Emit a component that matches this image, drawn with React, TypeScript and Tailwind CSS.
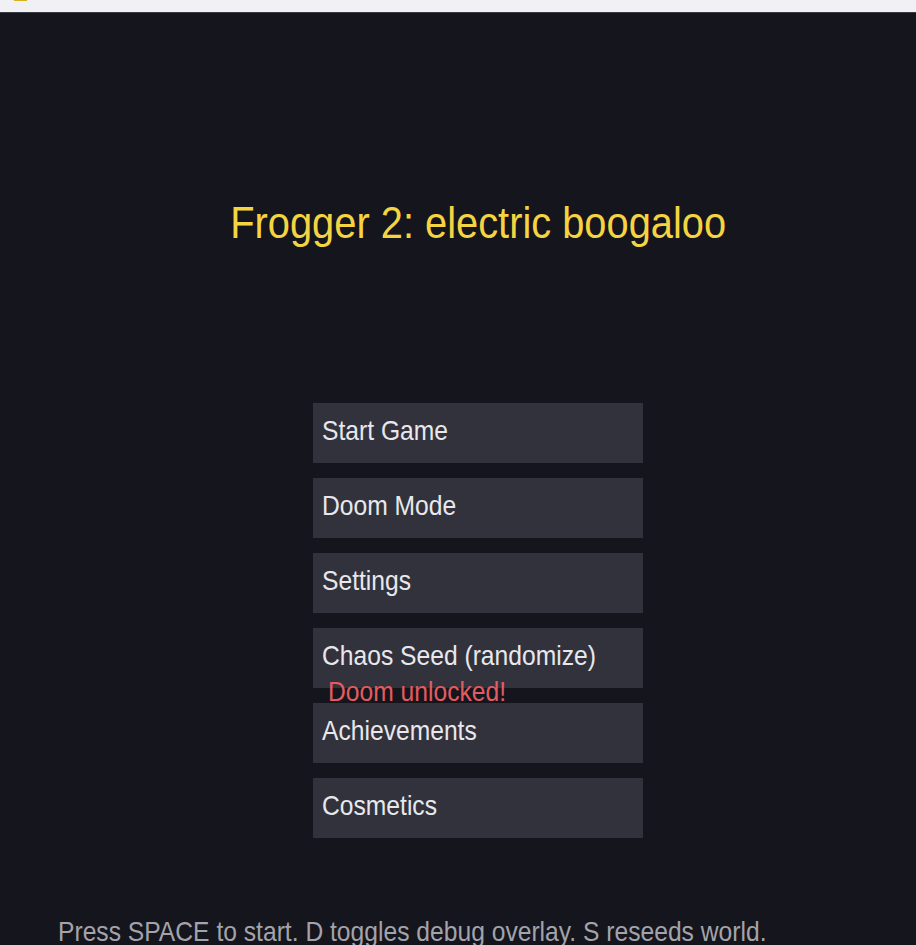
const items = [
  "Start Game",
  "Doom Mode",
  "Settings",
  "Chaos Seed (randomize)",
  "Achievements",
  "Cosmetics",
];

const font = {
  fontFamily: '"Liberation Sans", Arial, sans-serif',
};

export default function App() {
  return (
    <div className="h-[945px] overflow-hidden bg-[#15151d]" style={font}>
      {/* browser strip */}
      <div className="relative h-[13px] border-b border-[#3a3a44] bg-[#f0f0f5]">
        <div className="absolute left-[14px] top-0 h-[1px] w-[13px] bg-[#d6b21e]" />
      </div>

      <div className="flex flex-col items-center pl-10">
        <h1 className="mt-[182px] scale-x-[0.885] text-[45px] leading-[56px] text-[#f5d442]">
          Frogger 2: electric boogaloo
        </h1>

        <div className="relative mt-[152px] flex w-[330px] flex-col gap-[15px]">
          {items.map((label) => (
            <button
              key={label}
              className="flex h-[60px] items-start bg-[#32323d] px-[9px] pt-[10px] text-left text-[28px] leading-[36px] text-[#e8e8ec]"
            >
              <span className="inline-block origin-left scale-x-[0.88] whitespace-nowrap">{label}</span>
            </button>
          ))}
          <span className="absolute left-[15px] top-[273px] origin-left scale-x-[0.88] whitespace-nowrap text-[28px] leading-[32px] text-[#e25c5f]">
            Doom unlocked!
          </span>
        </div>
      </div>

      <p className="mt-[78px] pl-[58px] text-[28px] leading-[32px] text-[#a3a3ab]">
        <span className="inline-block origin-left scale-x-[0.88] whitespace-nowrap">
          Press SPACE to start. D toggles debug overlay. S reseeds world.
        </span>
      </p>
    </div>
  );
}
